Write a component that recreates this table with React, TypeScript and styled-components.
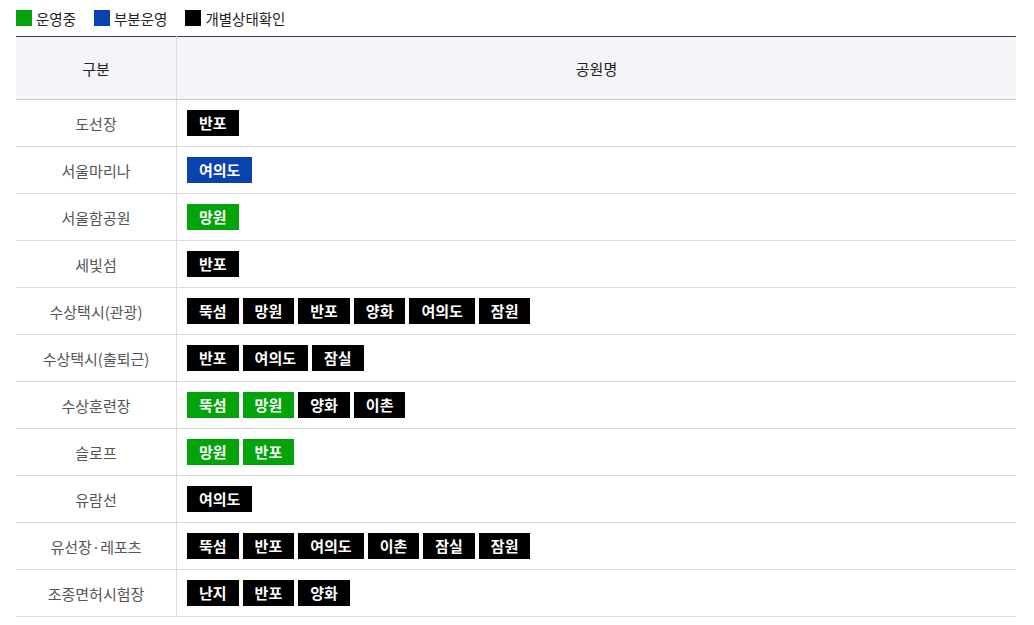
import styled, { createGlobalStyle } from "styled-components";

type Status = "run" | "partial" | "check";

type Park = {
    name: string;
    status: Status;
}

type Row = {
    category: string;
    parks: Park[];
}

const p = (name: string, status: Status = "check"): Park => ({ name, status });

const rows: Row[] = [
    { category: "도선장", parks: [p("반포")] },
    { category: "서울마리나", parks: [p("여의도", "partial")] },
    { category: "서울함공원", parks: [p("망원", "run")] },
    { category: "세빛섬", parks: [p("반포")] },
    { category: "수상택시(관광)", parks: [p("뚝섬"), p("망원"), p("반포"), p("양화"), p("여의도"), p("잠원")] },
    { category: "수상택시(출퇴근)", parks: [p("반포"), p("여의도"), p("잠실")] },
    { category: "수상훈련장", parks: [p("뚝섬", "run"), p("망원", "run"), p("양화"), p("이촌")] },
    { category: "슬로프", parks: [p("망원", "run"), p("반포", "run")] },
    { category: "유람선", parks: [p("여의도")] },
    { category: "유선장·레포츠", parks: [p("뚝섬"), p("반포"), p("여의도"), p("이촌"), p("잠실"), p("잠원")] },
    { category: "조종면허시험장", parks: [p("난지"), p("반포"), p("양화")] },
];

const statusColor: Record<Status, string> = {
    run: "#03a30a",
    partial: "#0a43b0",
    check: "#000000",
};

const legend: { status: Status; label: string }[] = [
    { status: "run", label: "운영중" },
    { status: "partial", label: "부분운영" },
    { status: "check", label: "개별상태확인" },
];

const GlobalStyle = createGlobalStyle`
    body {
        margin: 0;
        background: #fff;
        font-family: "Noto Sans CJK KR", "Noto Sans", sans-serif;
    }
`

const App = () => (
    <>
        <GlobalStyle />
        <Page>
            <Legend>
                {legend.map((item) => (
                    <LegendItem key={item.status}>
                        <LegendSwatch $status={item.status} />
                        {item.label}
                    </LegendItem>
                ))}
            </Legend>
            <Table>
                <thead>
                    <tr>
                        <HeadCell>구분</HeadCell>
                        <HeadCell>공원명</HeadCell>
                    </tr>
                </thead>
                <tbody>
                    {rows.map((row) => (
                        <tr key={row.category}>
                            <CategoryCell>{row.category}</CategoryCell>
                            <ParkCell>
                                <BadgeList>
                                    {row.parks.map((park) => (
                                        <Badge key={park.name} $status={park.status}>{park.name}</Badge>
                                    ))}
                                </BadgeList>
                            </ParkCell>
                        </tr>
                    ))}
                </tbody>
            </Table>
        </Page>
    </>
);

const Page = styled.div`
    padding: 8px 18px 0 16px;
    color: #333;
`

const Legend = styled.div`
    display: flex;
    gap: 18px;
    height: 20px;
    align-items: center;
    margin-bottom: 8px;
`

const LegendItem = styled.div`
    display: flex;
    align-items: center;
    gap: 4px;
    font-size: 14.5px;
    color: #222;
`

const LegendSwatch = styled.span<{ $status: Status }>`
    width: 16px;
    height: 16px;
    background: ${(props) => statusColor[props.$status]};
`

const Table = styled.table`
    width: 1000px;
    border-collapse: collapse;
    border-top: 1px solid #3b3e4e;

    td, th {
        border-bottom: 1px solid #dcdcdc;
        padding: 0;
    }
`

const HeadCell = styled.th`
    height: 62px;
    background: #f4f5f9;
    font-size: 15px;
    font-weight: 400;
    color: #222;
    border-bottom-color: #c8c8cc !important;

    &:first-child {
        width: 160px;
        border-right: 1px solid #dcdcdc;
    }
`

const CategoryCell = styled.td`
    width: 160px;
    height: 46px;
    text-align: center;
    font-size: 15px;
    color: #555;
    border-right: 1px solid #dcdcdc;
`

const ParkCell = styled.td`
    padding-left: 10px !important;
`

const BadgeList = styled.div`
    display: flex;
    gap: 4px;
    margin-top: -1px;
`

const Badge = styled.span<{ $status: Status }>`
    display: inline-flex;
    align-items: center;
    height: 26px;
    padding: 0 12px;
    background: ${(props) => statusColor[props.$status]};
    color: #fff;
    font-size: 15px;
    font-weight: 700;
`

export default App;
